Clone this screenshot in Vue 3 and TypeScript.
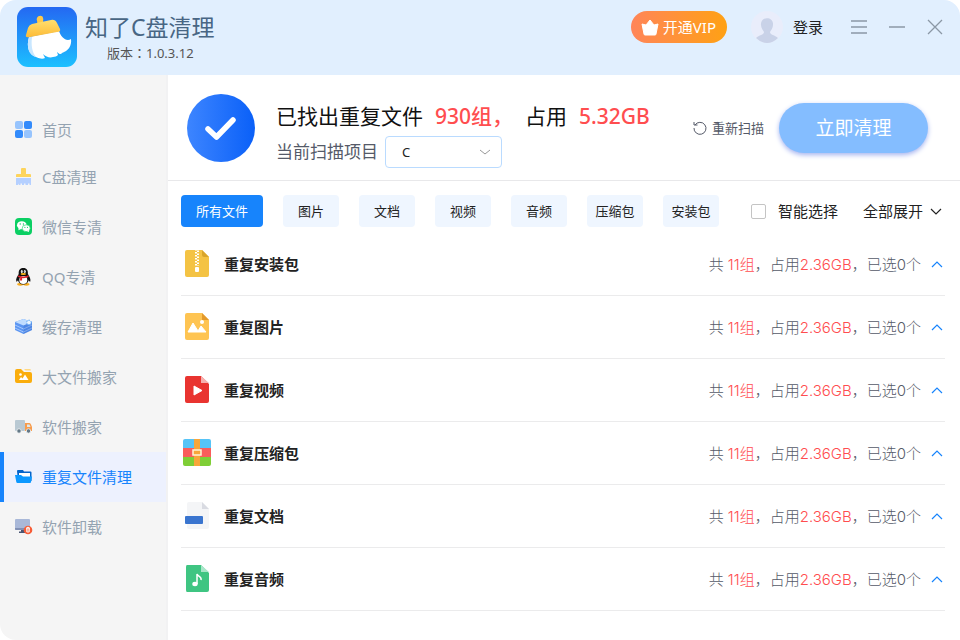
<script setup lang="ts">
import { ref } from 'vue'

interface NavItem {
  id: string
  label: string
}

interface FileGroup {
  id: string
  label: string
  groups: number
  size: string
  selected: number
}

const navItems: NavItem[] = [
  { id: 'home', label: '首页' },
  { id: 'disk', label: 'C盘清理' },
  { id: 'wechat', label: '微信专清' },
  { id: 'qq', label: 'QQ专清' },
  { id: 'cache', label: '缓存清理' },
  { id: 'bigfile', label: '大文件搬家' },
  { id: 'move', label: '软件搬家' },
  { id: 'duplicate', label: '重复文件清理' },
  { id: 'uninstall', label: '软件卸载' },
]

const tabs: string[] = ['所有文件', '图片', '文档', '视频', '音频', '压缩包', '安装包']

const fileGroups: FileGroup[] = [
  { id: 'package', label: '重复安装包', groups: 11, size: '2.36GB', selected: 0 },
  { id: 'image', label: '重复图片', groups: 11, size: '2.36GB', selected: 0 },
  { id: 'video', label: '重复视频', groups: 11, size: '2.36GB', selected: 0 },
  { id: 'archive', label: '重复压缩包', groups: 11, size: '2.36GB', selected: 0 },
  { id: 'document', label: '重复文档', groups: 11, size: '2.36GB', selected: 0 },
  { id: 'audio', label: '重复音频', groups: 11, size: '2.36GB', selected: 0 },
]

const activeNav = ref('duplicate')
const activeTab = ref('所有文件')
const drive = ref('C')
const smartSelect = ref(false)
</script>

<template>
  <div class="window">
    <header class="titlebar">
      <svg class="logo" viewBox="0 0 60 60" aria-hidden="true">
        <defs>
          <linearGradient id="logoBg" x1="0" y1="0" x2="0" y2="1">
            <stop offset="0" stop-color="#2468f2" />
            <stop offset="1" stop-color="#1cc0ff" />
          </linearGradient>
          <linearGradient id="logoCap" x1="0" y1="0" x2="0" y2="1">
            <stop offset="0" stop-color="#ffdf70" />
            <stop offset="1" stop-color="#fdbb36" />
          </linearGradient>
        </defs>
        <rect width="60" height="60" rx="11" fill="url(#logoBg)" />
        <path d="M12 30C9 40 12 48 19 50C23 52 26 52 28 51L26 47C29 50 33 51 36 50C38 50 40 49 41 48L40 45C42 47 44 48 45 46C51 44 55 39 54 32C49 35 44 30 42 24Z" fill="#fff" />
        <path d="M12 30C9 40 12 48 19 50C15 45 14 38 15 30Z" fill="#c9e7ff" />
        <path d="M20 17C21 14 19 13 20 11C21 8 26 8 26 11C27 13 25 14 27 16Z" fill="#ffc94a" />
        <path d="M11 21Q12 18 15 17L34 13Q38 12 40 16L43 22Q44 25 40 25L13 30Q8 31 9 28Z" fill="url(#logoCap)" />
      </svg>
      <div class="brand">
        <h1>知了C盘清理</h1>
        <p>版本：1.0.3.12</p>
      </div>

      <div class="actions">
        <button type="button" class="vip">
          <svg viewBox="0 0 18 17" aria-hidden="true">
            <path d="M1 5L5 6L9 1L13 6L17 5L15 15Q15 16 14 16H4Q3 16 3 15Z" fill="#fff" stroke="#fff" stroke-linejoin="round" />
          </svg>
          开通VIP
        </button>
        <a href="#login" class="login">
          <svg viewBox="0 0 32 32" aria-hidden="true">
            <circle cx="16" cy="16" r="16" fill="#e9edfb" />
            <path d="M10 14C9 5 23 5 22 14C22 17 20 19 19 21C19 24 24 24 27 27Q22 32 16 32Q10 32 5 27C8 24 13 24 13 21C12 19 10 17 10 14Z" fill="#c9d2e8" />
          </svg>
          登录
        </a>
        <div class="controls">
          <button type="button" aria-label="菜单">
            <svg viewBox="0 0 16 16"><path d="M0 2H16M0 8H16M0 14H16" /></svg>
          </button>
          <button type="button" aria-label="最小化">
            <svg viewBox="0 0 16 16"><path d="M0 8H16" /></svg>
          </button>
          <button type="button" aria-label="关闭">
            <svg viewBox="0 0 16 16"><path d="M1 1L15 15M15 1L1 15" /></svg>
          </button>
        </div>
      </div>
    </header>

    <div class="body">
      <nav class="sidebar">
        <a
          v-for="item in navItems"
          :key="item.id"
          :href="'#' + item.id"
          class="nav-item"
          :class="{ active: item.id === activeNav }"
          @click.prevent="activeNav = item.id"
        >
          <svg class="nav-icon" viewBox="0 0 18 18" aria-hidden="true">
            <template v-if="item.id === 'home'">
              <rect x="0" y="0" width="8" height="8" rx="2" fill="#97c4fd" />
              <rect x="9" y="0" width="8" height="8" rx="2" fill="#338bfb" />
              <rect x="0" y="9" width="8" height="8" rx="2" fill="#338bfb" />
              <rect x="9" y="9" width="8" height="8" rx="2" fill="#97c4fd" />
            </template>
            <template v-else-if="item.id === 'disk'">
              <path d="M6 1Q6 0 7 0H10Q11 0 11 1V6H15Q16 6 16 7V9H1V7Q1 6 2 6H6Z" fill="#fdd45c" />
              <path d="M1 10H16V17H14.500V15.500H13V17H10.500V15.500H9V17H7V15.500H5.500V17H4V15.500L3 17H1Z" fill="#b5d0ff" />
            </template>
            <template v-else-if="item.id === 'wechat'">
              <rect width="17" height="17" rx="4" fill="#0bcf63" />
              <ellipse cx="6.800" cy="7.200" rx="4.800" ry="4" fill="#fff" />
              <path d="M3.500 9.500L3.500 12.200L6 11Z" fill="#fff" />
              <ellipse cx="11.200" cy="10.200" rx="4" ry="3.400" fill="#fff" stroke="#0bcf63" stroke-width=".6" />
              <path d="M12 13L14 14V12Z" fill="#fff" />
              <g fill="#0bcf63">
                <circle cx="5.200" cy="6" r=".7" /><circle cx="8.400" cy="6" r=".7" />
                <circle cx="9.900" cy="9.300" r=".6" /><circle cx="12.500" cy="9.300" r=".6" />
              </g>
            </template>
            <template v-else-if="item.id === 'qq'">
              <ellipse cx="5.300" cy="16.300" rx="3.200" ry="1.400" fill="#f9ac1b" />
              <ellipse cx="11.300" cy="16.300" rx="3.200" ry="1.400" fill="#f9ac1b" />
              <path d="M8.300 0C4.600 0 3.500 2.500 3.700 6C2.500 8 .5 11 1.300 13.500C1.600 14 2.500 13 3 12.300C3.500 15 5.500 16.500 8.300 16.500S13.100 15 13.600 12.300C14.100 13 15 14 15.300 13.500C16.100 11 14.100 8 12.900 6C13.100 2.500 12 0 8.300 0Z" fill="#111" />
              <ellipse cx="8.300" cy="12" rx="4" ry="4" fill="#fff" />
              <ellipse cx="6.800" cy="3.600" rx="1" ry="1.500" fill="#fff" />
              <ellipse cx="9.800" cy="3.600" rx="1" ry="1.500" fill="#fff" />
              <circle cx="7" cy="3.800" r=".4" /><circle cx="9.600" cy="3.800" r=".4" />
              <ellipse cx="8.300" cy="6" rx="2.800" ry="1" fill="#fbb81d" />
              <path d="M3.400 7.300C6 9 10.600 9 13.200 7.300L13.700 8.800C11.500 10.200 9 10.300 7.300 10.100L7 12.600H5L5.200 9.700L3 8.800Z" fill="#e3232c" />
            </template>
            <template v-else-if="item.id === 'cache'">
              <path d="M0 4L8.500 1L17 4V12L8.500 16L0 12Z" fill="#5c96f2" />
              <path d="M0 4L8.500 1L17 4L8.500 7.500Z" fill="#bfdcff" />
              <path d="M0 7L8.500 11L17 7M0 10L8.500 14L17 10" fill="none" stroke="#b7d4ff" stroke-width=".8" />
              <path d="M8.500 7.500L17 4V12L8.500 16Z" fill="#2a63c8" opacity=".3" />
              <circle cx="14" cy="4.500" r="2.300" fill="#e9f4ff" stroke="#5aa6f5" stroke-dasharray="1.500 .8" />
            </template>
            <template v-else-if="item.id === 'bigfile'">
              <path d="M0 3Q0 1 2 1H6L9 4H15Q17 4 17 6V13Q17 15 15 15H2Q0 15 0 13Z" fill="#faad0c" />
              <path d="M9 1H15Q16 1 16 2.500H10.500Z" fill="#ffd983" />
              <circle cx="5.500" cy="6.500" r="1.300" fill="#fff" />
              <path d="M4 12L6 9L7.500 10.500L10 6.500L13.500 12Z" fill="#fff" />
            </template>
            <template v-else-if="item.id === 'move'">
              <rect x="0" y="2" width="10" height="11" rx="1" fill="#b9c9d3" />
              <path d="M10 5H14.500Q15.500 5 16 6.500L17 9V13H10Z" fill="#f79c4c" />
              <path d="M12 6.500H14.500L15.500 9H12Z" fill="#dbe9f0" />
              <circle cx="4" cy="13" r="2.200" fill="#647987" stroke="#f5f5f5" stroke-width=".8" />
              <circle cx="13.500" cy="13" r="2.200" fill="#647987" stroke="#f5f5f5" stroke-width=".8" />
            </template>
            <template v-else-if="item.id === 'duplicate'">
              <path d="M2 3Q2 2 3 2H8L9 3.500H15.500Q16.500 3.500 16.500 4.500V13H3Z" fill="#0464c9" />
              <path d="M4 5H15V9H4Z" fill="#fff" />
              <path d="M0 7H6L8 8.500H17L16 14Q16 15 15 15H2.500Q1.500 15 1.300 14Z" fill="#0c98ff" />
            </template>
            <template v-else>
              <rect x="0" y="1" width="15" height="11" rx="1" fill="#a9b8d8" />
              <path d="M0 10H15V11Q15 12 14 12H1Q0 12 0 11Z" fill="#8291b5" />
              <path d="M6 12H10V13.500H12V15H4V13.500H6Z" fill="#4a5674" />
              <circle cx="13" cy="12" r="4.300" fill="#f75c35" />
              <path d="M11 10.300H15M12 10V9.400H14V10M11.600 10.500L11.800 14H14.200L14.400 10.500M13 11V13.500" fill="none" stroke="#fff" stroke-width=".9" />
            </template>
          </svg>
          <span>{{ item.label }}</span>
        </a>
      </nav>

      <main class="content">
        <section class="summary">
          <svg class="status" viewBox="0 0 68 68" aria-hidden="true">
            <defs>
              <linearGradient id="statusBg" x1="0" y1="0" x2="1" y2="0">
                <stop offset="0" stop-color="#3d85ff" />
                <stop offset="1" stop-color="#0a60f8" />
              </linearGradient>
            </defs>
            <circle cx="34" cy="34" r="34" fill="url(#statusBg)" />
            <path d="M21 35L29.500 43L46 26" fill="none" stroke="#fff" stroke-width="5.500" stroke-linecap="round" stroke-linejoin="round" />
          </svg>
          <div class="result">
            <h2>
              <span>已找出重复文件</span>
              <strong>930组，</strong>
              <span>占用</span>
              <strong>5.32GB</strong>
            </h2>
            <div class="target">
              <label for="drive">当前扫描项目</label>
              <div class="select">
                <select id="drive" v-model="drive">
                  <option>C</option>
                  <option>D</option>
                </select>
                <svg viewBox="0 0 12 12" aria-hidden="true"><path d="M1 4L6 8L11 4" /></svg>
              </div>
            </div>
          </div>
          <button type="button" class="rescan">
            <svg viewBox="0 0 14 14" aria-hidden="true"><path d="M2 4A6 6 0 1 1 1 7M1 1V4H4.500" /></svg>
            重新扫描
          </button>
          <button type="button" class="clean">立即清理</button>
        </section>

        <section class="toolbar">
          <div class="tabs">
            <button
              v-for="tab in tabs"
              :key="tab"
              type="button"
              class="tab"
              :class="{ active: tab === activeTab }"
              @click="activeTab = tab"
            >
              {{ tab }}
            </button>
          </div>
          <label class="smart">
            <input v-model="smartSelect" type="checkbox" />
            智能选择
          </label>
          <button type="button" class="expand">
            全部展开
            <svg class="chevron" viewBox="0 0 12 12" aria-hidden="true"><path d="M1 4L6 9L11 4" /></svg>
          </button>
        </section>

        <ul class="groups">
          <li v-for="group in fileGroups" :key="group.id" class="group">
            <svg class="file-icon" viewBox="0 0 32 32" aria-hidden="true">
              <template v-if="group.id === 'package'">
                <path d="M6 2H21L28 9V27Q28 29 26 29H6Q4 29 4 27V4Q4 2 6 2Z" fill="#f4c344" />
                <path d="M21 2L28 9H23Q21 9 21 7Z" fill="#d9a52b" />
                <path d="M15 1V18" stroke="#fff" stroke-width="2" stroke-dasharray="1.500 1.500" />
                <path d="M17 2.500V18" stroke="#fff" stroke-width="2" stroke-dasharray="1.500 1.500" />
                <rect x="14" y="19" width="4" height="5" rx="1" fill="#fff" />
              </template>
              <template v-else-if="group.id === 'image'">
                <path d="M6 2H21L28 9V27Q28 29 26 29H6Q4 29 4 27V4Q4 2 6 2Z" fill="#fec452" />
                <path d="M21 2L28 9H21Z" fill="#e39a2c" />
                <circle cx="21" cy="11" r="2" fill="#fff" />
                <path d="M7 21L12 12L17 20L20 15L25 21Z" fill="#fff" stroke="#fff" stroke-linejoin="round" />
              </template>
              <template v-else-if="group.id === 'video'">
                <path d="M6 2H20L28 10V27Q28 29 26 29H6Q4 29 4 27V4Q4 2 6 2Z" fill="#e93430" />
                <path d="M20 2L28 9H20Z" fill="#f6b0ae" />
                <path d="M13 12V21L21 16.500Z" fill="#fff" stroke="#fff" stroke-linejoin="round" />
              </template>
              <template v-else-if="group.id === 'archive'">
                <path d="M2 4Q2 2 4 2H28Q30 2 30 4V11H2Z" fill="#56c4f7" />
                <path d="M2 11H30V20H2Z" fill="#f95d5b" />
                <path d="M2 20H30V27Q30 29 28 29H4Q2 29 2 27Z" fill="#7fce36" />
                <rect x="13" y="2" width="6" height="27" fill="#f7a63a" />
                <rect x="12" y="13" width="8" height="5" fill="#f7a63a" stroke="#fff3d8" stroke-width="1.500" />
              </template>
              <template v-else-if="group.id === 'document'">
                <path d="M8 2H21L28 9V27Q28 29 26 29H8Q6 29 6 27V4Q6 2 8 2Z" fill="#f4f5f7" />
                <path d="M21 2L28 9H21Z" fill="#d9dbe2" />
                <rect x="4" y="16" width="18" height="8" rx="1" fill="#3a75cf" />
              </template>
              <template v-else>
                <path d="M6 2H20L28 10V27Q28 29 26 29H6Q5 29 5 27V4Q5 2 6 2Z" fill="#3fc582" />
                <path d="M20 2L28 9H20Z" fill="#a9e6c9" />
                <ellipse cx="14" cy="21" rx="2.700" ry="2.200" fill="#fff" />
                <path d="M16 21V11C17 14 21 13 20 17" fill="none" stroke="#fff" stroke-width="1.500" />
              </template>
            </svg>
            <h3>{{ group.label }}</h3>
            <p class="stats">
              共 <em>{{ group.groups }}组</em>，占用<em>{{ group.size }}</em>，已选{{ group.selected }}个
            </p>
            <button type="button" class="toggle" :aria-label="'收起' + group.label">
              <svg class="chevron" viewBox="0 0 12 12"><path d="M1 9L6 4L11 9" /></svg>
            </button>
          </li>
        </ul>
      </main>
    </div>
  </div>
</template>

<style>
body {
  margin: 0;
  background: #fff;
}
</style>

<style scoped>
.window {
  display: flex;
  flex-direction: column;
  min-height: 100vh;
  border-radius: 16px;
  overflow: hidden;
  background: #fff;
  color: #222;
  font-family: 'Noto Sans', 'Noto Sans CJK SC', sans-serif;
  font-size: 15px;
  line-height: 20px;
}

.window *,
.window *::before {
  box-sizing: border-box;
}

h1,
h2,
h3,
p,
ul {
  margin: 0;
  padding: 0;
  font-weight: 400;
}

button {
  padding: 0;
  border: 0;
  background: none;
  color: inherit;
  font: inherit;
  cursor: pointer;
  white-space: nowrap;
}

a {
  color: inherit;
  text-decoration: none;
}

svg {
  display: block;
  flex: none;
}

.titlebar {
  display: flex;
  align-items: flex-start;
  padding: 7px 17px 8px;
  background: #e1effe;
}

.logo {
  width: 60px;
  height: 60px;
}

.brand {
  margin-left: 8px;
  padding-top: 4px;
}

.brand h1 {
  color: #486684;
  font-size: 23px;
  line-height: 32px;
}

.brand p {
  padding-left: 22px;
  color: #555;
  font-family: 'Noto Sans', 'Noto Sans CJK TC', sans-serif;
  font-size: 13px;
  line-height: 20px;
}

.actions {
  display: flex;
  align-items: center;
  margin-left: auto;
  padding-top: 4px;
}

.vip {
  display: flex;
  align-items: center;
  gap: 4px;
  height: 32px;
  padding: 0 11px 0 10px;
  border-radius: 16px;
  background: linear-gradient(90deg, #ff8559, #ffa114);
  color: #fff;
}

.vip svg {
  width: 18px;
  height: 17px;
}

.login {
  display: flex;
  align-items: center;
  gap: 10px;
  margin-left: 24px;
}

.login svg {
  width: 32px;
  height: 32px;
}

.controls {
  display: flex;
  gap: 22px;
  margin-left: 28px;
}

.controls svg {
  width: 16px;
  height: 16px;
  fill: none;
  stroke: #8b98a6;
  stroke-width: 1.3;
}

.body {
  display: flex;
  flex: 1;
}

.sidebar {
  flex: none;
  width: 168px;
  padding-top: 32px;
  border-right: 2px solid #f2f2f3;
  background: #f5f5f5;
}

.nav-item {
  display: flex;
  align-items: center;
  gap: 9px;
  height: 50px;
  padding-left: 11px;
  border-left: 4px solid transparent;
  color: #94a3b1;
}

.nav-item:first-child {
  height: 45px;
}

.nav-item.active {
  border-left-color: #1784fc;
  background: #edf1fe;
  color: #1784fc;
}

.nav-icon {
  width: 18px;
  height: 18px;
}

.content {
  flex: 1;
  min-width: 0;
}

.summary {
  display: flex;
  align-items: center;
  height: 106px;
  padding: 0 32px 0 19px;
  border-bottom: 1px solid #e8e8ea;
}

.status {
  width: 68px;
  height: 68px;
}

.result {
  margin-left: 21px;
  padding-top: 12px;
}

.result h2 {
  display: flex;
  gap: 12px;
  color: #111;
  font-size: 21px;
  line-height: 32px;
  white-space: nowrap;
}

.result strong {
  color: #ff4d4f;
  font-weight: 500;
}

.target {
  display: flex;
  align-items: center;
  gap: 7px;
  margin-top: 4px;
}

.target label {
  color: #555a68;
  font-size: 17px;
}

.select {
  position: relative;
  width: 117px;
}

.select select {
  display: block;
  width: 100%;
  height: 32px;
  padding: 0 16px;
  border: 1px solid #badbff;
  border-radius: 4px;
  appearance: none;
  background: #fff;
  color: #222;
  font: inherit;
  font-size: 13px;
}

.select svg {
  position: absolute;
  top: 10px;
  right: 11px;
  width: 12px;
  height: 12px;
  fill: none;
  stroke: #999;
  pointer-events: none;
}

.rescan {
  display: flex;
  align-items: center;
  gap: 5px;
  margin-left: auto;
  color: #555a68;
  font-size: 13px;
}

.rescan svg {
  width: 14px;
  height: 14px;
  fill: none;
  stroke: #555a68;
}

.clean {
  width: 149px;
  height: 50px;
  margin-left: 15px;
  border-radius: 25px;
  background: #84bdff;
  box-shadow: 0 2px 5px #a5b4f0;
  color: #fff;
  font-size: 19px;
}

.toolbar {
  display: flex;
  align-items: center;
  padding: 14px 18px 6px 13px;
}

.tabs {
  display: flex;
  gap: 20px;
}

.tab {
  min-width: 56px;
  height: 32px;
  padding: 0 8px;
  border-radius: 4px;
  background: #eff6ff;
  color: #222;
  font-size: 13px;
}

.tab.active {
  padding: 0 15px;
  background: #1784fc;
  color: #fff;
}

.smart {
  display: flex;
  align-items: center;
  gap: 12px;
  margin-left: auto;
  white-space: nowrap;
}

.smart input {
  width: 15px;
  height: 15px;
  margin: 0;
  border: 1px solid #c4c4c4;
  border-radius: 2px;
  appearance: none;
  background: #fff;
}

.smart input:checked {
  background: #1784fc;
}

.expand {
  display: flex;
  align-items: center;
  gap: 7px;
  margin-left: 25px;
}

.chevron {
  width: 12px;
  height: 12px;
  fill: none;
  stroke: currentColor;
  stroke-width: 1.2;
}

.groups {
  padding: 0 15px 0 13px;
  list-style: none;
}

.group {
  display: flex;
  align-items: center;
  height: 63px;
  padding-right: 2px;
  border-bottom: 1px solid #ebebec;
}

.file-icon {
  width: 32px;
  height: 32px;
}

.group h3 {
  margin-left: 11px;
  font-size: 15px;
  font-weight: 700;
}

.stats {
  margin-left: auto;
  padding-top: 2px;
  color: #555a68;
  font-family: Inter, 'Noto Sans CJK SC', sans-serif;
  font-weight: 300;
  white-space: nowrap;
}

.stats em {
  color: #ff4d4f;
  font-style: normal;
}

.toggle {
  margin-left: 10px;
  color: #1784fc;
}
</style>
